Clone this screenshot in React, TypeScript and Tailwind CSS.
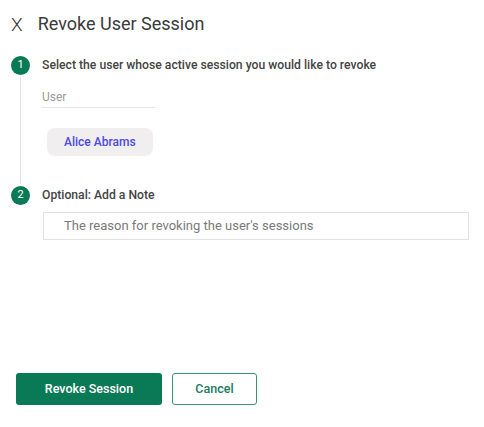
import React from "react";

const StepBadge = ({ n }: { n: number }) => (
  <div className="w-[19px] h-[19px] rounded-full bg-[#0a7a56] text-white text-[11px] flex items-center justify-center shrink-0">
    {n}
  </div>
);

export default function App() {
  return (
    <div
      className="w-[484px] h-[427px] bg-white relative overflow-hidden"
      style={{ fontFamily: "Roboto, 'Liberation Sans', sans-serif" }}
    >
      {/* Header */}
      <div className="flex items-center h-[48px] pl-[11px]">
        <span className="text-[19px] text-[#333] leading-none font-light">X</span>
        <h1 className="ml-[15px] text-[18px] text-[#3a3a3a] leading-none">Revoke User Session</h1>
      </div>

      {/* Steps */}
      <div className="pl-[11px] pr-[15px] mt-[8px]">
        <div className="flex">
          <div className="flex flex-col items-center w-[19px]">
            <StepBadge n={1} />
            <div className="w-px flex-1 bg-[#e3e3e3] mt-[2px] mb-[2px]" />
          </div>
          <div className="ml-[12px] flex-1 pb-[30px]">
            <div className="text-[12.2px] text-[#444] leading-[19px] font-medium">
              Select the user whose active session you would like to revoke
            </div>
            <div className="mt-[13px] w-[113px] border-b border-[#e4e4e4] pb-[2px] leading-[16px]">
              <span className="text-[12px] text-[#9a9a9a]">User</span>
            </div>
            <div className="mt-[20px] ml-[5px] inline-flex items-center h-[28px] px-[17px] rounded-[8px] bg-[#f1eef0] text-[12px] text-[#4a4ae6] font-medium">
              Alice Abrams
            </div>
          </div>
        </div>

        <div className="flex">
          <StepBadge n={2} />
          <div className="ml-[12px] flex-1">
            <div className="text-[12.2px] text-[#444] leading-[19px] font-medium">
              Optional: Add a Note
            </div>
            <div className="mt-[7px] ml-px h-[28px] border border-[#e2e2e2] flex items-center pl-[20px] text-[13px] text-[#7a7a7a]">
              The reason for revoking the user's sessions
            </div>
          </div>
        </div>
      </div>

      {/* Footer buttons */}
      <div className="absolute left-[16px] top-[373px] flex gap-[10px]">
        <button className="w-[146px] h-[32px] rounded-[3px] bg-[#0a7a56] text-white text-[12.5px] font-medium">
          Revoke Session
        </button>
        <button className="w-[85px] h-[32px] rounded-[3px] border border-[#3a9478] text-[#1e7a5c] bg-white text-[12.5px] font-medium">
          Cancel
        </button>
      </div>
    </div>
  );
}
